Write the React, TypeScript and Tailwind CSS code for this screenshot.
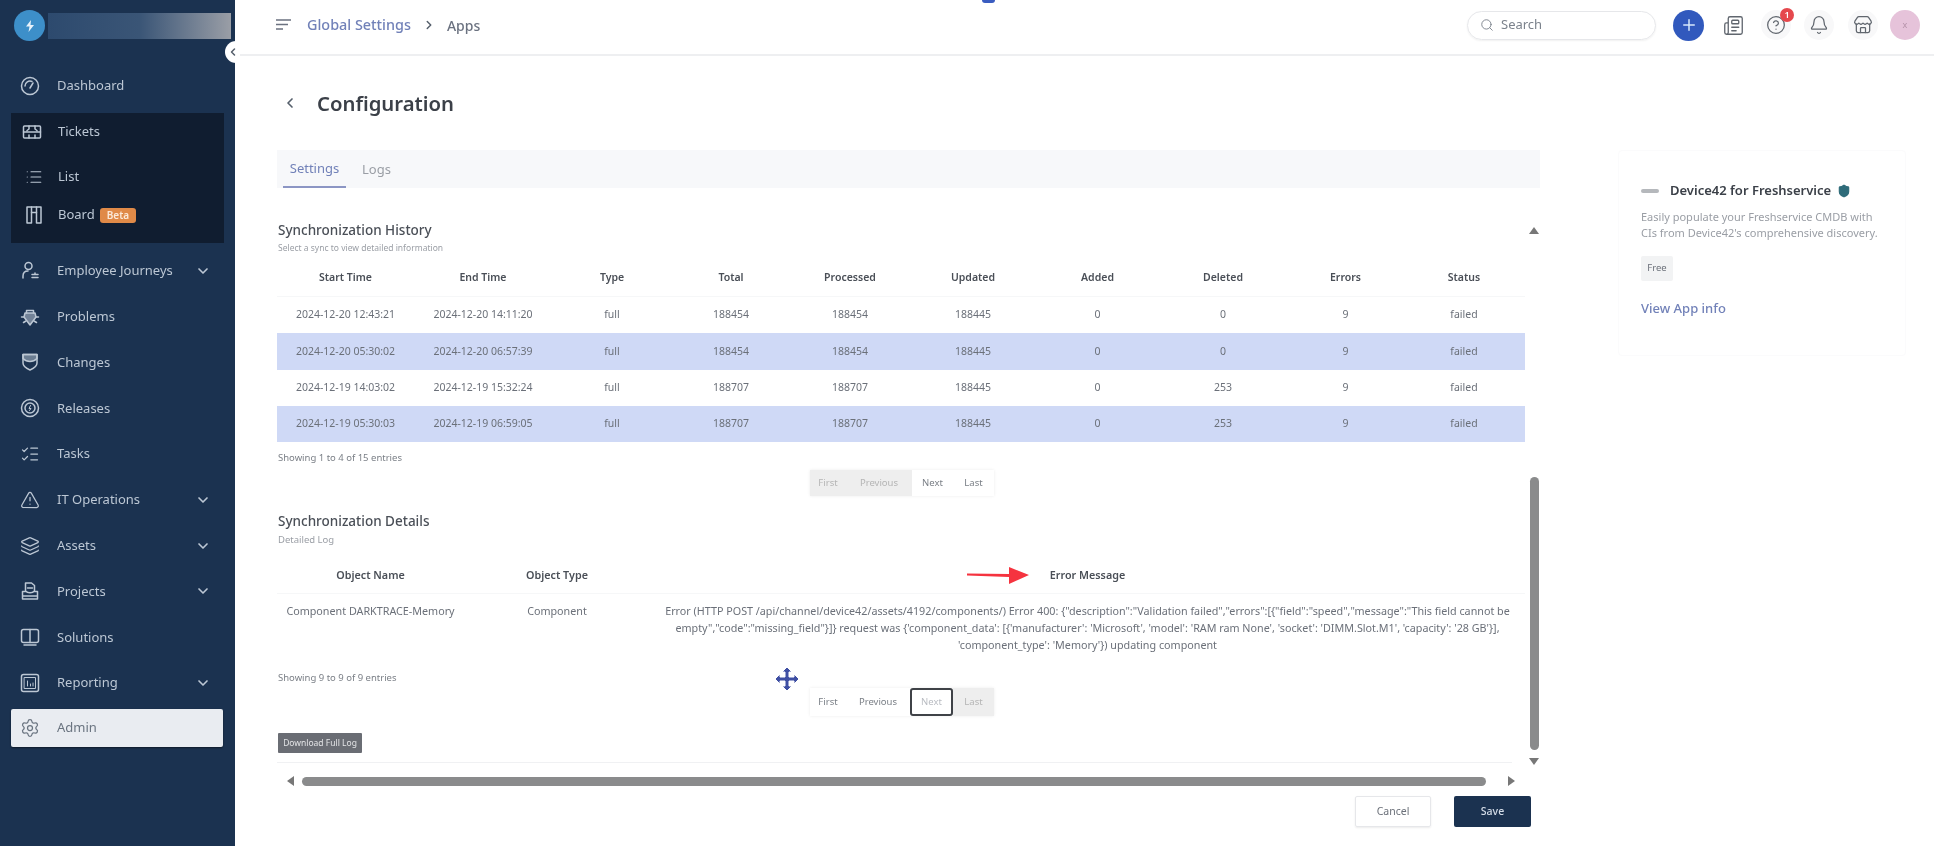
import type { ReactNode } from 'react';
import {
  Bell,
  ChevronDown,
  ChevronLeft,
  ChevronRight,
  CircleHelp,
  Layers,
  List,
  ListChecks,
  Newspaper,
  Plus,
  Search,
  Settings,
  ShieldCheck,
  Store,
  TriangleAlert,
} from 'lucide-react';

function NavIcon({ children }: { children: ReactNode }) {
  return (
    <svg width="20" height="20" viewBox="0 0 20 20" fill="none" stroke="currentColor" strokeWidth="1.5" strokeLinecap="round" strokeLinejoin="round" className="shrink-0">
      {children}
    </svg>
  );
}

const DashboardIcon = () => (
  <NavIcon>
    <circle cx="10" cy="10" r="8.5" />
    <path d="M5 10a5 5 0 0 1 7-4.5M10 12l3-5" />
  </NavIcon>
);
const TicketIcon = () => (
  <NavIcon>
    <rect x="1.5" y="4" width="17" height="12" rx="1" />
    <path d="M1.5 10h17M7 4v3l-2 1.5M13 4v3l2 1.5M7 16v-3M13 16v-3" />
  </NavIcon>
);
const BoardIcon = () => (
  <NavIcon>
    <path d="M3 2h14v16h-4.5V7.5H7.5V18H3z" />
    <path d="M7.5 2v5.5M12.5 2v5.5" />
  </NavIcon>
);
const JourneyIcon = () => (
  <NavIcon>
    <circle cx="8.5" cy="5" r="3.5" />
    <path d="M3 17v-2c0-3 2-5 5-5M12 13.5h6M12 16.5h6M15 12v1.5" />
  </NavIcon>
);
const BugIcon = () => (
  <NavIcon>
    <path d="M6.5 6V3.5h7V6" />
    <path d="M5 6h10l1 4-6 8-6-8z" fill="currentColor" fillOpacity="0.55" />
    <path d="M4 10H1.5M16 10h2.5M6 14l-2.5 1.5M14 14l2.5 1.5" />
  </NavIcon>
);
const ChangesIcon = () => (
  <NavIcon>
    <path d="M3 2.5h14V11c0 3.5-3.5 5.5-7 7-3.5-1.5-7-3.500-7-7z" />
    <path d="M3 6.5c4 4 10 4 14 0V2.5H3z" fill="currentColor" fillOpacity="0.5" />
  </NavIcon>
);
const ReleasesIcon = () => (
  <NavIcon>
    <circle cx="10" cy="10" r="8.5" />
    <circle cx="10" cy="10" r="5" />
    <path d="M10.5 7.5 9 10.5h2L9.5 12.5" strokeWidth="1" />
  </NavIcon>
);
const ProjectsIcon = () => (
  <NavIcon>
    <path d="M5.5 9.5V2h6l3 2.5v5" />
    <path d="M7.5 7h5" />
    <path d="M2.5 10.5h4c.5 1.5 6.5 1.5 7 0h4V18h-15zM2.5 15h15" />
  </NavIcon>
);
const SolutionsIcon = () => (
  <NavIcon>
    <rect x="1.5" y="2.5" width="17" height="13" rx="2" />
    <path d="M10 2.5v13M4 18h12" />
  </NavIcon>
);
const ReportingIcon = () => (
  <NavIcon>
    <rect x="1.5" y="1.5" width="17" height="17" rx="2" />
    <rect x="4.5" y="4.5" width="11" height="11" strokeWidth="1" />
    <path d="M7.5 13V8M10.5 13v-2M13 13v-3" strokeWidth="1" />
  </NavIcon>
);

const topNav: { label: string; icon: ReactNode; more?: boolean }[] = [
  { label: 'Employee Journeys', icon: <JourneyIcon />, more: true },
  { label: 'Problems', icon: <BugIcon /> },
  { label: 'Changes', icon: <ChangesIcon /> },
  { label: 'Releases', icon: <ReleasesIcon /> },
  { label: 'Tasks', icon: <ListChecks size={20} strokeWidth={1.5} /> },
  { label: 'IT Operations', icon: <TriangleAlert size={20} strokeWidth={1.5} />, more: true },
  { label: 'Assets', icon: <Layers size={20} strokeWidth={1.5} />, more: true },
  { label: 'Projects', icon: <ProjectsIcon />, more: true },
  { label: 'Solutions', icon: <SolutionsIcon /> },
  { label: 'Reporting', icon: <ReportingIcon />, more: true },
];

const historyHead = ['Start Time', 'End Time', 'Type', 'Total', 'Processed', 'Updated', 'Added', 'Deleted', 'Errors', 'Status'];

const historyRows = [
  ['2024-12-20 12:43:21', '2024-12-20 14:11:20', 'full', '188454', '188454', '188445', '0', '0', '9', 'failed'],
  ['2024-12-20 05:30:02', '2024-12-20 06:57:39', 'full', '188454', '188454', '188445', '0', '0', '9', 'failed'],
  ['2024-12-19 14:03:02', '2024-12-19 15:32:24', 'full', '188707', '188707', '188445', '0', '253', '9', 'failed'],
  ['2024-12-19 05:30:03', '2024-12-19 06:59:05', 'full', '188707', '188707', '188445', '0', '253', '9', 'failed'],
];

function Sidebar() {
  return (
    <aside className="relative w-[235px] shrink-0 bg-[#1b3250] text-[13px] text-[#bcc7d4]">
      <div className="flex h-[63px] items-start pl-[14px] pt-[10px]">
        <div className="flex h-[31px] w-[31px] items-center justify-center rounded-full bg-[#3d8fc9]">
          <svg width="14" height="14" viewBox="0 0 14 14">
            <path d="M8 1 3 7.5h3.5L5.5 13l5.5-7H7.5z" fill="#e8f2fa" />
          </svg>
        </div>
        <div className="ml-[3px] mt-[3px] h-[26px] w-[183px] bg-gradient-to-r from-[#2d4a6e] via-[#3a5576] to-[#9a9ea6]" />
      </div>
      <div className="absolute left-[225px] top-[41px] flex h-[22px] w-[15px] items-center justify-center rounded-l-full bg-white">
        <ChevronLeft size={12} strokeWidth={3} className="text-[#555f6b]" />
      </div>

      <div className="flex h-[46px] items-center pl-[20px]">
        <DashboardIcon />
        <span className="ml-[17px]">Dashboard</span>
      </div>

      <div className="mx-[11px] mt-[4px] h-[130px] w-[213px] bg-[#101d30]">
        <div className="flex h-[36px] items-center pl-[11px] pt-[1px]">
          <TicketIcon />
          <span className="ml-[16px]">Tickets</span>
        </div>
        <div className="mt-[10px] flex h-[36px] items-center pl-[14px]">
          <List size={18} strokeWidth={1.5} />
          <span className="ml-[15px]">List</span>
        </div>
        <div className="mt-[2px] flex h-[36px] items-center pl-[13px]">
          <BoardIcon />
          <span className="ml-[14px]">Board</span>
          <span className="ml-[5px] rounded-[3px] bg-[#e08a48] px-[7px] py-[1px] text-[10px] font-semibold leading-[13px] text-[#fbe9d9]">Beta</span>
        </div>
      </div>

      <div className="mt-[5px] flex flex-col">
        {topNav.map((item) => (
          <div key={item.label} className="flex h-[45.8px] items-center pl-[20px] pr-[24px]">
            {item.icon}
            <span className="ml-[17px] flex-1">{item.label}</span>
            {item.more && <ChevronDown size={16} strokeWidth={2.5} />}
          </div>
        ))}
      </div>

      <div className="mx-[11px] mt-[3px] flex h-[38px] w-[212px] items-center rounded-[2px] bg-[#e9ecf1] pl-[9px] text-[#6a7480] shadow-[0_1px_2px_rgba(0,0,0,0.5)]">
        <Settings size={20} strokeWidth={1.5} />
        <span className="ml-[17px]">Admin</span>
      </div>
    </aside>
  );
}

function Header() {
  return (
    <header className="flex h-[56px] shrink-0 items-center border-b-2 border-[#eeeff1] pb-[4px] pl-[41px] pr-[14px]">
      <svg width="15" height="12" viewBox="0 0 15 12" className="text-[#6b7280]">
        <path d="M0 1h15M0 5.5h12M0 10h7" stroke="currentColor" strokeWidth="1.6" />
      </svg>
      <span className="ml-[16px] text-[14.4px] font-medium text-[#7181b8]">Global Settings</span>
      <ChevronRight size={14} strokeWidth={2.5} className="ml-[11px] text-[#555f6b]" />
      <span className="ml-[11px] text-[14px] font-medium text-[#6b7280]">Apps</span>
      <div className="ml-auto flex h-[29px] w-[189px] items-center rounded-full border border-[#e6e7ea] pl-[12px] text-[13px] text-[#7b828c] shadow-[0_1px_2px_rgba(0,0,0,0.06)]">
        <Search size={14} strokeWidth={1.6} />
        <span className="ml-[7px]">Search</span>
      </div>
      <div className="ml-[17px] flex h-[31px] w-[31px] items-center justify-center rounded-full bg-[#3159bd] text-[#d6e8fb]">
        <Plus size={18} strokeWidth={2} />
      </div>
      <div className="ml-[14px] flex h-[30px] w-[30px] items-center justify-center">
        <Newspaper size={21} strokeWidth={1.5} className="text-[#60666e]" />
      </div>
      <div className="relative ml-[13px] flex h-[30px] w-[30px] items-center justify-center rounded-full bg-[#f8f8f9]">
        <CircleHelp size={20} strokeWidth={1.5} className="text-[#60666e]" />
        <span className="absolute -top-[2px] right-[-3px] flex h-[14px] w-[14px] items-center justify-center rounded-full bg-[#e5484d] text-[9px] font-semibold text-white">1</span>
      </div>
      <div className="ml-[13px] flex h-[30px] w-[30px] items-center justify-center rounded-full bg-[#f8f8f9]">
        <Bell size={20} strokeWidth={1.5} className="text-[#60666e]" />
      </div>
      <div className="ml-[14px] flex h-[30px] w-[30px] items-center justify-center rounded-full bg-[#f8f8f9]">
        <Store size={20} strokeWidth={1.5} className="text-[#60666e]" />
      </div>
      <div className="ml-[12px] flex h-[30px] w-[30px] items-center justify-center rounded-full bg-[#e6c3da] text-[9px] text-[#b492a8]">x</div>
    </header>
  );
}

function Pager({ focused }: { focused?: boolean }) {
  const cell = 'flex items-center justify-center';
  if (focused) {
    return (
      <div className="ml-[533px] flex h-[28px] w-[184px] text-[9.5px] text-[#7a7f86] shadow-[0_0_3px_rgba(0,0,0,0.08)]">
        <div className={`${cell} w-[36px]`}>First</div>
        <div className={`${cell} w-[64px]`}>Previous</div>
        <div className={`${cell} w-[43px] rounded-[3px] border-2 border-[#3f4247] text-[#b9bcc2]`}>Next</div>
        <div className={`${cell} w-[41px] bg-[#eeeeee] text-[#b5b5b5]`}>Last</div>
      </div>
    );
  }
  return (
    <div className="ml-[533px] flex h-[26px] w-[184px] text-[9.5px] text-[#7a7f86] shadow-[0_0_3px_rgba(0,0,0,0.08)]">
      <div className={`${cell} w-[36px] bg-[#eeeeee] text-[#b5b5b5]`}>First</div>
      <div className={`${cell} w-[66px] bg-[#eeeeee] text-[#b5b5b5]`}>Previous</div>
      <div className={`${cell} w-[41px]`}>Next</div>
      <div className={`${cell} w-[41px]`}>Last</div>
    </div>
  );
}

function HistoryTable() {
  const cols = 'grid grid-cols-[137px_138px_120px_118px_120px_126px_123px_128px_117px_120px] items-center text-center';
  return (
    <div className="mt-[7px] w-[1248px] text-[10.5px] text-[#6b7079]">
      <div className={`${cols} h-[36px] border-b border-[#f6f7f8] pb-[2px] font-semibold text-[#4a4f57]`}>
        {historyHead.map((h) => (
          <div key={h}>{h}</div>
        ))}
      </div>
      {historyRows.map((row, i) => (
        <div key={row[0]} className={`${cols} h-[36.25px] ${i % 2 === 1 ? 'bg-[#cfd9f6]' : ''}`}>
          {row.map((v, j) => (
            <div key={j}>{v}</div>
          ))}
        </div>
      ))}
    </div>
  );
}

function DetailsTable() {
  const cols = 'grid grid-cols-[187px_186px_875px] text-center';
  return (
    <div className="mt-[12px] w-[1248px] text-[10.75px] text-[#6b7079]">
      <div className={`${cols} h-[36px] items-center border-b border-[#f6f7f8] font-semibold text-[#4a4f57]`}>
        <div>Object Name</div>
        <div>Object Type</div>
        <div>Error Message</div>
      </div>
      <div className={`${cols} pt-[9px] leading-[17px]`}>
        <div>Component DARKTRACE-Memory</div>
        <div>Component</div>
        <div className="px-[14px]">
          {`Error (HTTP POST /api/channel/device42/assets/4192/components/) Error 400: {"description":"Validation failed","errors":[{"field":"speed","message":"This field cannot be empty","code":"missing_field"}]} request was {'component_data': [{'manufacturer': 'Microsoft', 'model': 'RAM ram None', 'socket': 'DIMM.Slot.M1', 'capacity': '28 GB'}], 'component_type': 'Memory'}) updating component`}
        </div>
      </div>
    </div>
  );
}

function SyncPanel() {
  return (
    <div className="flex h-[608px]">
      <div className="relative w-[1250px] shrink-0">
        <div className="pl-[1px] pt-[34px]">
          <h3 className="text-[13.5px] font-medium leading-[17px] text-[#4a4f57]">Synchronization History</h3>
          <p className="mt-[3px] text-[8.5px] leading-[12px] text-[#9a9ea5]">Select a sync to view detailed information</p>
        </div>
        <HistoryTable />
        <p className="mt-[9px] pl-[1px] text-[9.5px] leading-[13px] text-[#7a7f86]">Showing 1 to 4 of 15 entries</p>
        <div className="mt-[6px]">
          <Pager />
        </div>

        <h3 className="mt-[17px] pl-[1px] text-[13.5px] font-medium leading-[17px] text-[#4a4f57]">Synchronization Details</h3>
        <p className="mt-[4px] pl-[1px] text-[9.5px] leading-[12px] text-[#9a9ea5]">Detailed Log</p>
        <DetailsTable />
        <p className="mt-[17px] pl-[1px] text-[9.5px] leading-[13px] text-[#7a7f86]">Showing 9 to 9 of 9 entries</p>
        <div className="mt-[4px]">
          <Pager focused />
        </div>

        <button className="ml-[1px] mt-[17px] flex h-[20px] w-[84px] items-center justify-center rounded-[1px] bg-[#6a6d74] text-[8.5px] text-[#e3e4e6]">Download Full Log</button>
        <div className="mt-[9px] h-px w-[1235px] bg-[#f0f1f3]" />
        <div className="mt-[13px] flex items-center">
          <svg width="8" height="10" viewBox="0 0 8 10" className="ml-[10px]">
            <path d="M7 0v10L0 5z" fill="#777" />
          </svg>
          <div className="ml-[7px] h-[9px] w-[1184px] rounded-full bg-[#8a8b8c]" />
          <svg width="8" height="10" viewBox="0 0 8 10" className="ml-[21px]">
            <path d="M1 0v10l7-5z" fill="#777" />
          </svg>
        </div>

        {/* annotation over the screen recording */}
        <svg width="64" height="20" viewBox="0 0 64 20" className="absolute left-[690px] top-[377px]">
          <path d="M0 8.5 42 9V2l20 8-20 9v-7L0 10.5z" fill="#f5333f" />
        </svg>
        <svg width="24" height="24" viewBox="0 0 24 24" className="absolute left-[498px] top-[479px]">
          <path d="M12 0l5 5h-3v5h5V7l5 5-5 5v-3h-5v5h3l-5 5-5-5h3v-5H5v3l-5-5 5-5v3h5V5H7z" fill="#3f4fa3" stroke="#fff" strokeWidth="1" />
        </svg>
      </div>

      <div className="ml-[1px] flex w-[12px] flex-col items-center pt-[39px]">
        <svg width="10" height="7" viewBox="0 0 10 7">
          <path d="M5 0l5 7H0z" fill="#777" />
        </svg>
        <div className="mt-[243px] h-[273px] w-[9px] rounded-full bg-[#8a8b8c]" />
        <svg width="10" height="7" viewBox="0 0 10 7" className="mt-[8px]">
          <path d="M5 7l5-7H0z" fill="#777" />
        </svg>
      </div>
    </div>
  );
}

function AppCard() {
  return (
    <div className="ml-[78px] mt-[94px] h-[206px] w-[288px] rounded-[4px] border border-[#fbfbfc] pl-[22px] pt-[30px]">
      <div className="flex items-center">
        <span className="h-[4px] w-[18px] rounded-full bg-[#b5b8bc]" />
        <span className="ml-[11px] text-[13px] font-semibold text-[#3b4048]">Device42 for Freshservice</span>
        <ShieldCheck size={14} fill="#2f6c7a" strokeWidth={2} className="ml-[6px] text-[#2f6c7a]" />
      </div>
      <p className="mt-[8px] w-[250px] text-[11px] leading-[16.5px] text-[#9a9ea5]">
        Easily populate your Freshservice CMDB with CIs from Device42's comprehensive discovery.
      </p>
      <div className="mt-[14px] flex h-[25px] w-[32px] items-center justify-center rounded-[2px] bg-[#f2f3f4] text-[9.5px] text-[#6b7079]">Free</div>
      <div className="mt-[18px] text-[13px] font-medium text-[#7181b8]">View App info</div>
    </div>
  );
}

export default function App() {
  return (
    <div className="relative flex h-[846px] w-[1934px] overflow-hidden bg-white font-['Noto_Sans',sans-serif] blur-[0.5px]">
      <Sidebar />
      <main className="flex min-w-0 flex-1 flex-col">
        <Header />
        <div className="flex flex-1">
          <section className="ml-[42px] w-[1263px] shrink-0">
            <div className="flex h-[94px] items-center pl-[5px]">
              <ChevronLeft size={16} strokeWidth={2.5} className="text-[#555f6b]" />
              <h1 className="ml-[19px] text-[20.3px] font-semibold text-[#3b4048]">Configuration</h1>
            </div>
            <div className="flex h-[38px] items-stretch bg-[#f7f8fa] pl-[6px] text-[13px]">
              <div className="flex w-[63px] items-center justify-center border-b-2 border-[#8c96c4] pt-[2px] text-[#7181b8]">Settings</div>
              <div className="ml-[16px] flex items-center pt-[2px] text-[#9a9ea5]">Logs</div>
            </div>
            <SyncPanel />
            <div className="mr-[9px] flex justify-end gap-[23px]">
              <button className="h-[31px] w-[76px] rounded-[2px] border border-[#e6e7ea] text-[10.5px] text-[#6b7079] shadow-[0_1px_2px_rgba(0,0,0,0.08)]">Cancel</button>
              <button className="h-[31px] w-[77px] rounded-[2px] bg-[#1b3250] text-[10.5px] font-medium text-[#d5dde8]">Save</button>
            </div>
          </section>
          <AppCard />
        </div>
      </main>
      {/* sliver of a floating widget at the top edge */}
      <div className="absolute left-[982px] top-0 h-[3px] w-[13px] rounded-b-full bg-[#3a5cc0]" />
    </div>
  );
}
